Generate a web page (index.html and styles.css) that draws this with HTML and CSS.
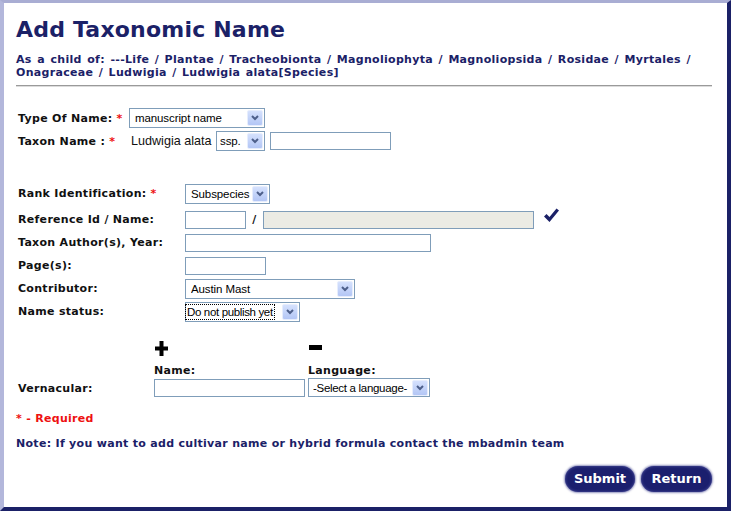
FILE: index.html
```html
<!DOCTYPE html>
<html>
<head>
<meta charset="utf-8">
<title>Add Taxonomic Name</title>
<link rel="stylesheet" href="styles.css">
</head>
<body>
<div class="frame">
  <h1 class="title">Add Taxonomic Name</h1>
  <div class="crumbs">As a child of: ---Life / Plantae / Tracheobionta / Magnoliophyta / Magnoliopsida / Rosidae / Myrtales /<br>Onagraceae / Ludwigia / Ludwigia alata[Species]</div>
  <div class="rule"></div>

  <div class="form">
    <div class="row top1">
      <span class="lbl lbl-type">Type Of Name: <span class="req">*</span></span>
      <span class="sel sel-type"><span class="sel-text">manuscript name</span><span class="sel-btn"><svg width="8" height="6" viewBox="0 0 8 6"><polyline points="1,1 4,4 7,1" fill="none" stroke="#4d5f8a" stroke-width="2"/></svg></span></span>
    </div>
    <div class="row top2">
      <span class="lbl lbl-taxon">Taxon Name : <span class="req">*</span></span>
      <span class="plain">Ludwigia alata</span>
      <span class="sel sel-ssp"><span class="sel-text">ssp.</span><span class="sel-btn"><svg width="8" height="6" viewBox="0 0 8 6"><polyline points="1,1 4,4 7,1" fill="none" stroke="#4d5f8a" stroke-width="2"/></svg></span></span>
      <span class="inp inp-taxon"></span>
    </div>

    <div class="grid">
      <div class="grow rank">
        <span class="glbl">Rank Identification: <span class="req">*</span></span>
        <span class="sel sel-rank"><span class="sel-text">Subspecies</span><span class="sel-btn"><svg width="8" height="6" viewBox="0 0 8 6"><polyline points="1,1 4,4 7,1" fill="none" stroke="#4d5f8a" stroke-width="2"/></svg></span></span>
      </div>
      <div class="grow ref">
        <span class="glbl">Reference Id / Name:</span>
        <span class="inp inp-refid"></span>
        <span class="slash">/</span>
        <span class="inp inp-refname"></span>
        <svg class="check" width="15" height="15" viewBox="0 0 15 15"><polygon points="0,8.5 2.5,6 5.5,9 12.5,0.5 15,2.5 5.5,14" fill="#1b2167"/></svg>
      </div>
      <div class="grow">
        <span class="glbl">Taxon Author(s), Year:</span>
        <span class="inp inp-author"></span>
      </div>
      <div class="grow">
        <span class="glbl">Page(s):</span>
        <span class="inp inp-pages"></span>
      </div>
      <div class="grow">
        <span class="glbl">Contributor:</span>
        <span class="sel sel-contrib"><span class="sel-text">Austin Mast</span><span class="sel-btn"><svg width="8" height="6" viewBox="0 0 8 6"><polyline points="1,1 4,4 7,1" fill="none" stroke="#4d5f8a" stroke-width="2"/></svg></span></span>
      </div>
      <div class="grow">
        <span class="glbl">Name status:</span>
        <span class="sel sel-status"><span class="sel-text focus">Do not publish yet</span><span class="sel-btn"><svg width="8" height="6" viewBox="0 0 8 6"><polyline points="1,1 4,4 7,1" fill="none" stroke="#4d5f8a" stroke-width="2"/></svg></span></span>
      </div>
    </div>

    <div class="vern">
      <span></span>
      <span class="icon-cell"><svg width="13" height="15" viewBox="0 0 13 15"><polygon points="4.5,0 8.5,0 8.5,5.5 13,5.5 13,9.5 8.5,9.5 8.5,15 4.5,15 4.5,9.5 0,9.5 0,5.5 4.5,5.5" fill="#000"/></svg></span>
      <span class="icon-cell"><svg class="minus" width="13" height="15" viewBox="0 0 13 15"><rect x="0" y="4" width="13" height="5" fill="#000"/></svg></span>

      <span></span>
      <span class="vhead">Name:</span>
      <span class="vhead">Language:</span>

      <span class="vlbl">Vernacular:</span>
      <span class="vcell"><span class="inp inp-vname"></span></span>
      <span class="vcell"><span class="sel sel-lang"><span class="sel-text">-Select a language-</span><span class="sel-btn"><svg width="8" height="6" viewBox="0 0 8 6"><polyline points="1,1 4,4 7,1" fill="none" stroke="#4d5f8a" stroke-width="2"/></svg></span></span></span>
    </div>
  </div>

  <div class="required">* - Required</div>
  <div class="note">Note: If you want to add cultivar name or hybrid formula contact the mbadmin team</div>

  <div class="actions">
    <span class="btn">Submit</span>
    <span class="btn">Return</span>
  </div>
</div>
</body>
</html>
```

FILE: styles.css
```css
html, body {
  margin: 0;
  padding: 0;
  background: #ffffff;
}

.frame {
  box-sizing: border-box;
  width: 731px;
  height: 511px;
  border-top: 3px solid #a9add3;
  border-left: 4px solid #b3b7db;
  border-right: 4px solid #1b2167;
  border-bottom: 4px solid #1b2167;
  padding: 14px 15px 0 12px;
  font-family: "DejaVu Sans", Verdana, sans-serif;
  color: #111;
  display: flex;
  flex-direction: column;
}

.title {
  margin: 0;
  font-size: 22px;
  line-height: 26px;
  font-weight: bold;
  letter-spacing: 0.2px;
  color: #1b2167;
}

.crumbs {
  margin-top: 10px;
  font-size: 11px;
  line-height: 13px;
  font-weight: bold;
  letter-spacing: 0.3px;
  word-spacing: 1.4px;
  color: #1b2167;
  white-space: nowrap;
}

.rule {
  margin-top: 6px;
  border-top: 1px solid #9a9a9a;
  border-bottom: 1px solid #dcdcdc;
}

.form {
  padding-left: 2px;
  font-size: 11px;
  font-weight: bold;
  letter-spacing: 0.3px;
}

.row {
  display: flex;
  align-items: center;
  height: 20px;
}

.top1 { margin-top: 21px; }
.top2 { margin-top: 3px; }

.lbl { flex: none; white-space: nowrap; }
.lbl-type { width: 111px; }
.lbl-taxon { width: 113px; }

.req { color: #ee1111; }

.plain {
  font-weight: normal;
  font-size: 12.6px;
  letter-spacing: 0;
  font-family: "Liberation Sans", Arial, sans-serif;
  white-space: nowrap;
  width: 85px;
  flex: none;
}

.sel {
  flex: none;
  box-sizing: border-box;
  display: inline-flex;
  align-items: center;
  height: 20px;
  border: 1px solid #7f9db9;
  background: #fff;
  padding-left: 5px;
  font-family: "Liberation Sans", Arial, sans-serif;
  font-weight: normal;
  font-size: 11.5px;
  letter-spacing: -0.1px;
  color: #000;
}

.sel-text {
  flex: 1;
  white-space: nowrap;
  overflow: hidden;
}

.sel-text.focus {
  flex: none;
  border: 1px dotted #000;
  margin-left: -3px;
  padding: 0 1px;
  line-height: 14px;
}

.sel-btn {
  flex: none;
  box-sizing: border-box;
  width: 16px;
  height: 16px;
  margin: 0 1px 0 auto;
  border: 1px solid #e6edfd;
  border-radius: 2px;
  background: linear-gradient(#d5e1fd, #b3c6f5);
  display: flex;
  align-items: center;
  justify-content: center;
}

.sel-type { width: 136px; }
.sel-ssp { width: 49px; padding-left: 3px; }
.sel-rank { width: 85px; }
.sel-contrib { width: 170px; }
.sel-status { width: 115px; padding-left: 2px; letter-spacing: -0.35px; }
.sel-lang { width: 122px; height: 19px; padding-left: 4px; letter-spacing: -0.3px; }

.inp {
  flex: none;
  box-sizing: border-box;
  display: inline-block;
  height: 18px;
  border: 1px solid #7f9db9;
  background: #fff;
}

.inp-taxon { width: 121px; margin-left: 5px; }
.inp-refid { width: 61px; }
.inp-refname { width: 271px; background: #ebebe4; }
.inp-author { width: 246px; }
.inp-pages { width: 81px; }
.inp-vname { width: 151px; }

.grid {
  margin-top: 31px;
}

.grow {
  display: flex;
  align-items: center;
  height: 23px;
}

.grow.ref { margin-top: 3px; }

.glbl {
  flex: none;
  width: 167px;
  white-space: nowrap;
}

.slash {
  width: 17px;
  text-align: center;
  flex: none;
}

.check {
  margin-left: 10px;
  margin-top: -8px;
}

.vern {
  margin-top: 18px;
  display: grid;
  grid-template-columns: 136px 154px auto;
  grid-template-rows: 16px 21px 19px;
  align-items: end;
}

.icon-cell {
  display: flex;
  padding-left: 1px;
  align-self: start;
}

.vhead {
  line-height: 13px;
  padding-bottom: 1px;
}

.vlbl {
  align-self: center;
  padding-top: 2px;
}

.vcell {
  display: flex;
  align-items: center;
  align-self: center;
}

.required {
  margin-top: 15px;
  font-size: 11px;
  font-weight: bold;
  letter-spacing: 0.3px;
  color: #ee1111;
}

.note {
  margin-top: 12px;
  font-size: 11px;
  font-weight: bold;
  letter-spacing: 0.3px;
  color: #1b2167;
}

.actions {
  margin-top: 16px;
  display: flex;
  justify-content: flex-end;
  gap: 6px;
}

.btn {
  box-sizing: border-box;
  height: 26px;
  width: 70px;
  border-radius: 13px;
  background: #1b1f6e;
  box-shadow: 0 0 2px 1px rgba(40, 44, 130, 0.5), inset 0 0 3px rgba(120, 124, 200, 0.6);
  color: #fff;
  font-family: "DejaVu Sans", Verdana, sans-serif;
  font-weight: bold;
  font-size: 13px;
  line-height: 26px;
  text-align: center;
}

.btn + .btn { width: 71px; }
```
